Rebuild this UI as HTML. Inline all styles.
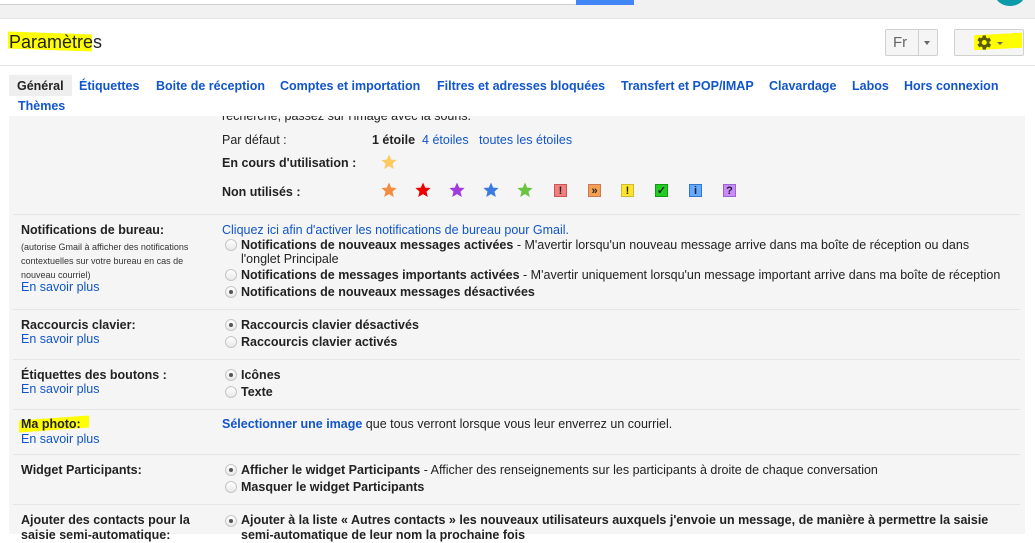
<!DOCTYPE html>
<html><head><meta charset="utf-8"><style>
*{margin:0;padding:0;box-sizing:border-box}
body{width:1035px;height:534px;overflow:hidden;background:#fff;font-family:"Liberation Sans",Arial,sans-serif;font-size:12.5px;color:#222;position:relative}
.a{position:absolute;white-space:nowrap}
.blue{color:#15c}
b{font-weight:bold}
.sep{position:absolute;left:13px;width:1007px;height:1px;background:#e5e5e5}
.r{position:absolute;width:12px;height:12px;border-radius:50%;border:1px solid #c6c6c6;background:linear-gradient(#fff,#e8e8e8)}
.r.on::after{content:"";position:absolute;left:3px;top:3px;width:4px;height:4px;border-radius:50%;background:#555}
.sq{position:absolute;width:13px;height:13px;font-size:11px;font-weight:bold;text-align:center;line-height:12px;color:#222}
.st{position:absolute;width:16px;height:16px}
</style></head><body>
<svg width="0" height="0" style="position:absolute"><defs><path id="star" d="M8 0.5L10.2 5.6 15.6 6 11.5 9.6 12.8 15 8 12.1 3.2 15 4.5 9.6 0.4 6 5.8 5.6Z"/></defs></svg>
<div class="a" style="left:0;top:0;width:1035px;height:19px;background:#f1f1f1;border-bottom:1px solid #e5e5e5"></div>
<div class="a" style="left:0;top:0;width:576px;height:5px;background:#fff;border-bottom:1px solid #ccc"></div>
<div class="a" style="left:576px;top:0;width:58px;height:5px;background:#4285f4"></div>
<div class="a" style="left:995px;top:-18px;width:30px;height:24px;border-radius:50%;background:#0b9aa8"></div>
<div class="a" style="left:0;top:19px;width:1035px;height:47px;border-bottom:1px solid #e5e5e5"></div>
<div class="a" style="left:8px;top:33px;width:84px;height:17px;background:#ff0;transform:skewY(2deg)"></div>
<div class="a" style="left:9px;top:32px;font-size:18px;color:#222">Paramètres</div>
<div class="a" style="left:885px;top:29px;width:53px;height:27px;border:1px solid #d0d0d0;background:#f5f5f5;border-radius:2px"></div>
<div class="a" style="left:918px;top:29px;width:1px;height:27px;background:#d0d0d0"></div>
<div class="a" style="left:893px;top:34px;font-size:15px;color:#666">Fr</div>
<div class="a" style="left:924px;top:41px;border:3px solid transparent;border-top:4px solid #666"></div>
<div class="a" style="left:954px;top:29px;width:70px;height:27px;border:1px solid #d0d0d0;background:#f5f5f5;border-radius:2px"></div>
<div class="a" style="left:974px;top:34px;width:48px;height:15px;background:#ff0;transform:skewY(-3deg)"></div>
<svg class="a" style="left:974px;top:33px" width="19" height="19" viewBox="0 0 24 24"><path fill="#5a5a00" fill-rule="evenodd" d="M19.4 13a7.5 7.5 0 000-2l2.1-1.6-2-3.5-2.5 1a7 7 0 00-1.7-1L15 3h-4l-.4 2.6a7 7 0 00-1.7 1l-2.5-1-2 3.5L6.6 11a7.5 7.5 0 000 2l-2.1 1.6 2 3.5 2.5-1a7 7 0 001.7 1L11 21h4l.4-2.6a7 7 0 001.7-1l2.5 1 2-3.5zM13 15.2a3.2 3.2 0 110-6.4 3.2 3.2 0 010 6.4z"/></svg>
<div class="a" style="left:997px;top:42px;border:3px solid transparent;border-top:3px solid #666"></div>
<div class="a" style="left:9px;top:116px;width:1016px;height:418px;background:#f5f5f5"></div>
<div class="a" style="left:222px;top:109px;color:#222">recherche, passez sur l'image avec la souris.</div>
<div class="a" style="left:0;top:96px;width:1035px;height:20px;background:#fff"></div>
<div class="a" style="left:9px;top:75px;width:63px;height:21px;background:#eee"></div>
<div class="a" style="left:17px;top:79px;font-weight:bold;color:#222">Général</div>
<div class="a blue" style="left:79px;top:79px;font-weight:bold">Étiquettes</div>
<div class="a blue" style="left:156px;top:79px;font-weight:bold">Boite de réception</div>
<div class="a blue" style="left:280px;top:79px;font-weight:bold">Comptes et importation</div>
<div class="a blue" style="left:437px;top:79px;font-weight:bold">Filtres et adresses bloquées</div>
<div class="a blue" style="left:621px;top:79px;font-weight:bold">Transfert et POP/IMAP</div>
<div class="a blue" style="left:769px;top:79px;font-weight:bold">Clavardage</div>
<div class="a blue" style="left:852px;top:79px;font-weight:bold">Labos</div>
<div class="a blue" style="left:904px;top:79px;font-weight:bold">Hors connexion</div>
<div class="a blue" style="left:18px;top:99px;font-weight:bold">Thèmes</div>
<div class="a" style="left:222px;top:133px">Par défaut :</div>
<div class="a" style="left:372px;top:133px"><b>1 étoile</b>&nbsp; <span class="blue">4 étoiles</span>&nbsp;&nbsp; <span class="blue">toutes les étoiles</span></div>
<div class="a" style="left:222px;top:156px;font-weight:bold">En cours d'utilisation :</div>
<svg class="st" style="left:381px;top:154px"><use href="#star" fill="#fcc962"/></svg>
<div class="a" style="left:222px;top:185px;font-weight:bold">Non utilisés :</div>
<svg class="st" style="left:381px;top:182px"><use href="#star" fill="#f58b3e"/></svg>
<svg class="st" style="left:415px;top:182px"><use href="#star" fill="#e00"/></svg>
<svg class="st" style="left:449px;top:182px"><use href="#star" fill="#a03be0"/></svg>
<svg class="st" style="left:483px;top:182px"><use href="#star" fill="#3b7ae0"/></svg>
<svg class="st" style="left:517px;top:182px"><use href="#star" fill="#6ac43f"/></svg>
<div class="sq" style="left:554px;top:184px;background:#f08080;border:1px solid #c55">!</div>
<div class="sq" style="left:588px;top:184px;background:#f5a050;border:1px solid #c75">»</div>
<div class="sq" style="left:621px;top:184px;background:#ffe42a;border:1px solid #cb3">!</div>
<div class="sq" style="left:655px;top:184px;background:#2c2;border:1px solid #191">✓</div>
<div class="sq" style="left:689px;top:184px;background:#6af;border:1px solid #37c">i</div>
<div class="sq" style="left:723px;top:184px;background:#c8f;border:1px solid #96c">?</div>
<div class="sep" style="top:214px"></div>
<div class="a" style="left:21px;top:223px;font-weight:bold">Notifications de bureau:</div>
<div class="a" style="left:21px;top:240px;font-size:9px;line-height:14px;color:#333;white-space:normal;width:170px">(autorise Gmail à afficher des notifications contextuelles sur votre bureau en cas de nouveau courriel)</div>
<div class="a blue" style="left:21px;top:280px">En savoir plus</div>
<div class="a blue" style="left:222px;top:223px">Cliquez ici afin d'activer les notifications de bureau pour Gmail.</div>
<div class="r" style="left:225px;top:239px"></div>
<div class="a" style="left:241px;top:238px"><b>Notifications de nouveaux messages activées</b> - M'avertir lorsqu'un nouveau message arrive dans ma boîte de réception ou dans</div>
<div class="a" style="left:241px;top:252px">l'onglet Principale</div>
<div class="r" style="left:225px;top:269px"></div>
<div class="a" style="left:241px;top:268px"><b>Notifications de messages importants activées</b> - M'avertir uniquement lorsqu'un message important arrive dans ma boîte de réception</div>
<div class="r on" style="left:225px;top:286px"></div>
<div class="a" style="left:241px;top:285px;font-weight:bold">Notifications de nouveaux messages désactivées</div>
<div class="sep" style="top:309px"></div>
<div class="a" style="left:21px;top:318px;font-weight:bold">Raccourcis clavier:</div>
<div class="a blue" style="left:21px;top:332px">En savoir plus</div>
<div class="r on" style="left:225px;top:319px"></div>
<div class="a" style="left:241px;top:318px;font-weight:bold">Raccourcis clavier désactivés</div>
<div class="r" style="left:225px;top:336px"></div>
<div class="a" style="left:241px;top:335px;font-weight:bold">Raccourcis clavier activés</div>
<div class="sep" style="top:359px"></div>
<div class="a" style="left:21px;top:368px;font-weight:bold">Étiquettes des boutons :</div>
<div class="a blue" style="left:21px;top:382px">En savoir plus</div>
<div class="r on" style="left:225px;top:369px"></div>
<div class="a" style="left:241px;top:368px;font-weight:bold">Icônes</div>
<div class="r" style="left:225px;top:386px"></div>
<div class="a" style="left:241px;top:385px;font-weight:bold">Texte</div>
<div class="sep" style="top:409px"></div>
<div class="a" style="left:19px;top:418px;width:70px;height:12px;background:#ff0;transform:skewY(-4deg)"></div>
<div class="a" style="left:21px;top:417px;font-weight:bold">Ma photo:</div>
<div class="a blue" style="left:21px;top:432px">En savoir plus</div>
<div class="a" style="left:222px;top:417px"><b class="blue">Sélectionner une image</b> que tous verront lorsque vous leur enverrez un courriel.</div>
<div class="sep" style="top:454px"></div>
<div class="a" style="left:21px;top:463px;font-weight:bold">Widget Participants:</div>
<div class="r on" style="left:225px;top:464px"></div>
<div class="a" style="left:241px;top:463px"><b>Afficher le widget Participants</b> - Afficher des renseignements sur les participants à droite de chaque conversation</div>
<div class="r" style="left:225px;top:481px"></div>
<div class="a" style="left:241px;top:480px;font-weight:bold">Masquer le widget Participants</div>
<div class="sep" style="top:504px"></div>
<div class="a" style="left:21px;top:513px;font-weight:bold;line-height:15px">Ajouter des contacts pour la<br>saisie semi-automatique:</div>
<div class="r on" style="left:225px;top:515px"></div>
<div class="a" style="left:241px;top:513px;line-height:15px"><b>Ajouter à la liste « Autres contacts » les nouveaux utilisateurs auxquels j'envoie un message, de manière à permettre la saisie<br>semi-automatique de leur nom la prochaine fois</b></div>
</body></html>
